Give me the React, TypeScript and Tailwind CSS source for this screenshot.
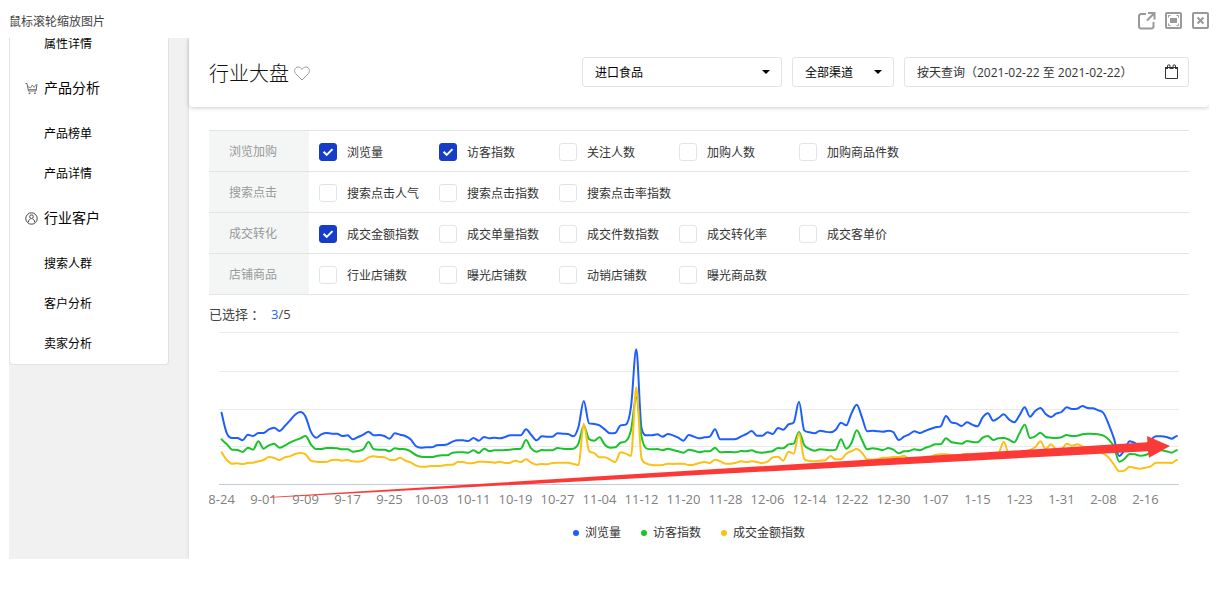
import { useState } from "react";

const FONT = "font-['Open_Sans','Noto_Sans_CJK_SC',sans-serif]";

/* Daily readings, measured down from the top of the plot in thirds of a unit. */
const VIEWS = [
  263, 325, 339, 339, 346, 329, 333, 324, 324, 313, 308, 318, 304, 287, 269, 261, 275, 320, 338, 328,
  324, 326, 326, 333, 331, 343, 336, 329, 320, 331, 330, 333, 341, 325, 329, 333, 343, 363, 368, 367,
  367, 361, 360, 358, 350, 346, 346, 348, 339, 347, 336, 340, 338, 340, 336, 331, 331, 331, 313, 330,
  346, 334, 335, 335, 325, 326, 327, 334, 305, 228, 295, 297, 301, 313, 325, 324, 301, 299, 245, 73,
  310, 331, 331, 328, 335, 327, 331, 338, 347, 330, 335, 340, 337, 335, 313, 343, 343, 343, 342, 334,
  327, 318, 332, 332, 322, 327, 309, 314, 298, 292, 230, 316, 322, 325, 317, 320, 322, 314, 293, 301,
  265, 239, 277, 319, 317, 319, 320, 317, 322, 345, 335, 328, 319, 324, 318, 312, 307, 304, 273, 292,
  295, 303, 292, 299, 304, 277, 265, 287, 279, 268, 283, 292, 271, 247, 275, 258, 249, 267, 276, 266,
  261, 247, 252, 251, 243, 249, 250, 256, 264, 298, 340, 393, 375, 349, 354, 365, 360, 345, 334, 334,
  336, 341, 333,
];

const VISITORS = [
  343, 358, 374, 375, 381, 368, 374, 349, 371, 361, 356, 368, 362, 353, 346, 340, 333, 358, 372, 372,
  369, 369, 370, 373, 373, 380, 378, 373, 351, 373, 374, 374, 379, 370, 372, 373, 379, 390, 395, 396,
  396, 393, 391, 391, 383, 382, 382, 383, 376, 384, 371, 378, 376, 376, 375, 374, 372, 371, 345, 371,
  380, 375, 376, 376, 369, 371, 372, 371, 355, 302, 342, 347, 337, 359, 368, 367, 353, 349, 315, 217,
  335, 371, 373, 372, 376, 371, 375, 379, 383, 374, 377, 382, 379, 379, 368, 382, 381, 381, 382, 378,
  379, 376, 382, 383, 381, 378, 369, 370, 358, 356, 321, 360, 372, 377, 373, 374, 376, 374, 343, 371,
  354, 316, 345, 373, 370, 372, 375, 369, 374, 385, 379, 378, 373, 376, 369, 364, 358, 358, 340, 351,
  354, 356, 348, 351, 352, 338, 333, 345, 340, 339, 344, 352, 325, 299, 339, 334, 323, 336, 338, 339,
  337, 330, 333, 332, 328, 326, 327, 328, 332, 344, 365, 410, 402, 387, 388, 392, 390, 383, 377, 376,
  379, 383, 376,
];

const SALES = [
  382, 405, 416, 415, 417, 414, 413, 409, 405, 396, 399, 405, 397, 394, 387, 384, 388, 407, 410, 411,
  411, 405, 404, 407, 405, 409, 410, 407, 397, 394, 396, 397, 404, 405, 398, 407, 412, 421, 425, 425,
  423, 423, 422, 419, 419, 411, 411, 415, 414, 410, 410, 411, 413, 410, 414, 413, 407, 411, 403, 413,
  419, 417, 418, 414, 413, 413, 413, 417, 420, 296, 378, 384, 397, 397, 404, 411, 382, 386, 393, 187,
  400, 416, 420, 421, 420, 416, 417, 416, 416, 420, 419, 414, 411, 414, 404, 409, 416, 416, 413, 409,
  411, 409, 411, 414, 410, 397, 395, 407, 380, 386, 325, 402, 408, 409, 407, 406, 393, 403, 403, 386,
  378, 372, 383, 403, 404, 402, 398, 398, 396, 396, 392, 402, 402, 402, 396, 395, 390, 388, 388, 390,
  392, 389, 386, 390, 390, 388, 388, 388, 385, 350, 387, 388, 385, 380, 375, 367, 349, 372, 358, 372,
  372, 356, 362, 358, 364, 368, 372, 378, 386, 398, 418, 439, 437, 425, 429, 431, 428, 424, 413, 413,
  413, 414, 405,
];

const DATES = [
  "8-24", "9-01", "9-09", "9-17", "9-25", "10-03", "10-11", "10-19", "10-27", "11-04", "11-12", "11-20",
  "11-28", "12-06", "12-14", "12-22", "12-30", "1-07", "1-15", "1-23", "1-31", "2-08", "2-16",
];

const X0 = 12.6;
const STEP = 5.249;

/* Monotone cubic through the daily points, so peaks never overshoot. */
function smoothPath(data: number[]) {
  const ys = data.map((v) => v / 3);
  const slope = ys.map((y, i) => {
    if (i === 0 || i === ys.length - 1) return 0;
    const a = y - ys[i - 1];
    const b = ys[i + 1] - y;
    if (a * b <= 0) return 0;
    const m = (a + b) / 2;
    const cap = 3 * Math.min(Math.abs(a), Math.abs(b));
    return Math.sign(m) * Math.min(Math.abs(m), cap);
  });
  slope[0] = (ys[1] - ys[0]) * 1.2;
  let d = `M${X0} ${ys[0].toFixed(2)}`;
  for (let i = 1; i < ys.length; i++) {
    const x = X0 + STEP * i;
    const c1 = ys[i - 1] + slope[i - 1] / 3;
    const c2 = ys[i] - slope[i] / 3;
    d += `C${(x - (STEP * 2) / 3).toFixed(2)} ${c1.toFixed(2)} ${(x - STEP / 3).toFixed(2)} ${c2.toFixed(2)} ${x.toFixed(2)} ${ys[i].toFixed(2)}`;
  }
  return d;
}

const METRICS = [
  { group: "浏览加购", items: ["浏览量", "访客指数", "关注人数", "加购人数", "加购商品件数"] },
  { group: "搜索点击", items: ["搜索点击人气", "搜索点击指数", "搜索点击率指数"] },
  { group: "成交转化", items: ["成交金额指数", "成交单量指数", "成交件数指数", "成交转化率", "成交客单价"] },
  { group: "店铺商品", items: ["行业店铺数", "曝光店铺数", "动销店铺数", "曝光商品数"] },
];

function CartIcon() {
  return (
    <svg viewBox="0 0 13 13" className="size-[13px]" fill="none" stroke="#666" strokeWidth="1" aria-hidden="true">
      <path d="M0.5 1.5h1.500l1.500 7.500h7.500l1-7" />
      <path d="M3 4.500l2.500 1.500 1.800-3 1.700 2.500 2-3M3.500 7.500h7.500" strokeWidth="0.8" />
      <path d="M4.500 10.500v1.500M10 10.500v1.500" strokeWidth="1.600" />
    </svg>
  );
}

function CustomerIcon() {
  return (
    <svg viewBox="0 0 13 13" className="size-[13px]" fill="none" stroke="#444" strokeWidth="1" aria-hidden="true">
      <circle cx="6.5" cy="6.5" r="5.7" />
      <circle cx="6.5" cy="4.7" r="1.8" />
      <path d="M3.5 10V8.8l1.9-2M9.5 10V8.8l-1.9-2" />
    </svg>
  );
}

function NavLink({ label }: { label: string }) {
  return (
    <a href="#" className="flex h-10 items-center pl-[34px] text-xs text-black">
      {label}
    </a>
  );
}

function NavHeading({ label, icon }: { label: string; icon: React.ReactNode }) {
  return (
    <h2 className="flex h-[50px] items-center gap-1.5 pb-0.5 pl-[15px] text-sm text-black">
      {icon}
      {label}
    </h2>
  );
}

function Picker({ label, value, width }: { label: string; value: string; width: string }) {
  return (
    <div className={`grid h-[30px] items-center rounded-[3px] border border-[#e3e3e5] ${width}`}>
      <select aria-label={label} className="col-start-1 row-start-1 h-full w-full appearance-none bg-transparent pl-3 pt-0.5 text-xs text-black outline-none">
        <option>{value}</option>
      </select>
      <svg viewBox="0 0 8 4" className="pointer-events-none col-start-1 row-start-1 mr-[11px] h-1 w-2 justify-self-end" aria-hidden="true">
        <path d="M0 0h8L4 4z" fill="#000" />
      </svg>
    </div>
  );
}

function Metric({ label, checked, onChange }: { label: string; checked: boolean; onChange: () => void }) {
  return (
    <label className="flex w-[120px] items-center gap-2.5 whitespace-nowrap text-xs text-[#333]">
      <span className="grid size-[18px] shrink-0">
        <input
          type="checkbox"
          checked={checked}
          onChange={onChange}
          className="peer col-start-1 row-start-1 size-[18px] appearance-none rounded-[3px] border border-[#e2e5e8] bg-white checked:border-[#153dc8] checked:bg-[#153dc8]"
        />
        <svg viewBox="0 0 18 18" className="pointer-events-none invisible col-start-1 row-start-1 size-[18px] peer-checked:visible" aria-hidden="true">
          <path d="M4.6 8.8l3.1 3.1 5.8-5.8" fill="none" stroke="#fff" strokeWidth="2" />
        </svg>
      </span>
      <span className="pt-0.5">{label}</span>
    </label>
  );
}

function Legend({ label, dot }: { label: string; dot: string }) {
  return (
    <li className="flex items-center gap-1.5">
      <span className={`size-1.5 rounded-full ${dot}`} />
      {label}
    </li>
  );
}

function TrendChart() {
  return (
    <svg viewBox="0 0 980 185" className="block w-full" role="img" aria-label="趋势图">
      <path d="M10 7.5H970M10 46.5H970M10 84.5H970M10 121.5H970" stroke="#ebebee" strokeWidth="1" />
      <path d="M10 159.5H970" stroke="#c0cbe0" strokeWidth="1" />
      <g fill="none" strokeWidth="2" strokeLinejoin="round" strokeLinecap="round">
        <path d={smoothPath(VIEWS)} stroke="#1e5eff" />
        <path d={smoothPath(VISITORS)} stroke="#1ac32b" />
        <path d={smoothPath(SALES)} stroke="#fcc016" />
      </g>
      <g fontSize="13" fill="#808080" textAnchor="middle">
        {DATES.map((d, i) => (
          <text key={d} x={X0 + STEP * 8 * i} y="179">
            {d}
          </text>
        ))}
      </g>
      <path d="M61 172L471 146.3L938.5 117.3L938 111L961 121L940 132.7L939 126.3L471 151L61 172.8z" fill="#fb3a38" />
    </svg>
  );
}

export default function App() {
  const [selected, setSelected] = useState(["浏览量", "访客指数", "成交金额指数"]);
  const toggle = (name: string) =>
    setSelected((s) => (s.includes(name) ? s.filter((n) => n !== name) : s.length < 5 ? [...s, name] : s));

  return (
    <div className={`bg-white pb-[38px] pl-[9px] pr-2 ${FONT}`}>
      <header className="flex h-[38px] items-center justify-between pt-1">
        <p className="pt-0.5 text-xs text-[#444]">鼠标滚轮缩放图片</p>
        <div className="-mr-px flex gap-[9px] text-[#999]">
          <button type="button" aria-label="新窗口打开" className="size-[18px]">
            <svg viewBox="0 0 18 18" fill="none" stroke="currentColor" strokeWidth="2">
              <path d="M8 2H2.500L1 3.500v11.500l1.500 1.500H14l1.500-1.500V10" />
              <path d="M10 1h6.500v6.500M16 1.500L9 8.500" />
            </svg>
          </button>
          <button type="button" aria-label="适应窗口" className="size-[18px]">
            <svg viewBox="0 0 18 18" fill="none" stroke="currentColor">
              <rect x="1" y="1" width="15" height="15" rx="1" strokeWidth="2" />
              <path d="M3.500 5.500v-2h2M11.500 3.500h2v2M3.500 11.500v2h2M13.500 11.500v2h-2" strokeWidth="1" />
              <rect x="5" y="6" width="7" height="5" fill="currentColor" stroke="none" />
            </svg>
          </button>
          <button type="button" aria-label="关闭" className="size-[18px]">
            <svg viewBox="0 0 18 18" fill="none" stroke="currentColor" strokeWidth="2">
              <rect x="1" y="1" width="15" height="15" rx="1" />
              <path d="M5.500 5.500l6 6M11.500 5.500l-6 6" />
            </svg>
          </button>
        </div>
      </header>

      <div className="flex items-stretch gap-5 overflow-hidden bg-[#f1f1f1]">
        <nav className="w-40 shrink-0 self-start overflow-hidden rounded-b border border-t-0 border-[#e1e1e3] bg-white">
          <div className="-mt-[14px]">
            <NavLink label="属性详情" />
            <NavHeading label="产品分析" icon={<CartIcon />} />
            <NavLink label="产品榜单" />
            <NavLink label="产品详情" />
            <NavHeading label="行业客户" icon={<CustomerIcon />} />
            <NavLink label="搜索人群" />
            <NavLink label="客户分析" />
            <NavLink label="卖家分析" />
          </div>
        </nav>

        <main className="min-w-0 flex-1 bg-white shadow-[0_0_4px_rgba(0,0,0,0.12)]">
          <div className="flex h-[69px] items-center justify-between rounded-b px-5 pb-0.5 shadow-[0_1px_4px_rgba(0,0,0,0.2)]">
            <div className="flex items-center gap-[5px] pt-1">
              <h1 className="text-xl font-light text-[#111]">行业大盘</h1>
              <button type="button" aria-label="收藏">
                <svg viewBox="0 0 16 15" className="h-[15px] w-4" fill="none" stroke="#999" strokeWidth="1">
                  <path d="M8 14L1.6 7.6C-.3 5.4.5 1 4.2 1 6.2 1 7.4 2.2 8 3.4 8.600 2.200 9.800 1 11.800 1c3.700 0 4.500 4.400 2.600 6.600z" />
                </svg>
              </button>
            </div>
            <div className="flex gap-2.5">
              <Picker label="类目" value="进口食品" width="w-[200px]" />
              <Picker label="渠道" value="全部渠道" width="w-[102px]" />
              <label className="flex h-[30px] w-[285px] items-center rounded-[3px] border border-[#e3e3e5] pl-3 pr-[10px]">
                <input
                  readOnly
                  aria-label="查询日期"
                  value="按天查询（2021-02-22 至 2021-02-22）"
                  className="min-w-0 flex-1 bg-transparent pt-0.5 font-['Open_Sans','Noto_Sans_CJK_TC',sans-serif] text-xs text-[#333] outline-none"
                />
                <svg viewBox="0 0 13 16" className="h-4 w-[13px]" fill="none" stroke="#333" strokeWidth="1" aria-hidden="true">
                  <path d="M0.500 3.500h12v11h-12z" />
                  <path d="M0 4h2.500M5 4h3M10.500 4h2.500" strokeWidth="2" />
                  <path d="M2.500 5V2q0-1.200 1.250-1.200T5 2v3M8 5V2q0-1.200 1.250-1.200T10.500 2v3" />
                </svg>
              </label>
            </div>
          </div>

          <div className="px-5 pt-[23px]">
            <div className="border-t border-[#e2e4e5]">
              {METRICS.map((row) => (
                <div key={row.group} role="group" aria-label={row.group} className="flex h-[41px] border-b border-[#e2e4e5]">
                  <div className="flex w-[100px] shrink-0 items-center bg-[#f4f6f6] pl-5 pt-0.5 text-xs text-[#999]">{row.group}</div>
                  <div className="flex flex-1 items-center pl-2.5 pt-0.5">
                    {row.items.map((name) => (
                      <Metric key={name} label={name} checked={selected.includes(name)} onChange={() => toggle(name)} />
                    ))}
                  </div>
                </div>
              ))}
            </div>
            <p className="flex h-[30px] items-center pt-[9px] text-[13px] text-[#444]">
              已选择<span className="font-['Noto_Sans_CJK_TC',sans-serif]">：</span>
              <span className="ml-2.5 text-[#1e5eff]">{selected.length}</span>/5
            </p>
            <TrendChart />
            <ul className="flex h-[49px] items-start justify-center gap-5 pr-5 pt-[15px] text-xs text-[#333]">
              <Legend label="浏览量" dot="bg-[#1e5eff]" />
              <Legend label="访客指数" dot="bg-[#1ac32b]" />
              <Legend label="成交金额指数" dot="bg-[#fcc016]" />
            </ul>
          </div>
        </main>
      </div>
    </div>
  );
}
